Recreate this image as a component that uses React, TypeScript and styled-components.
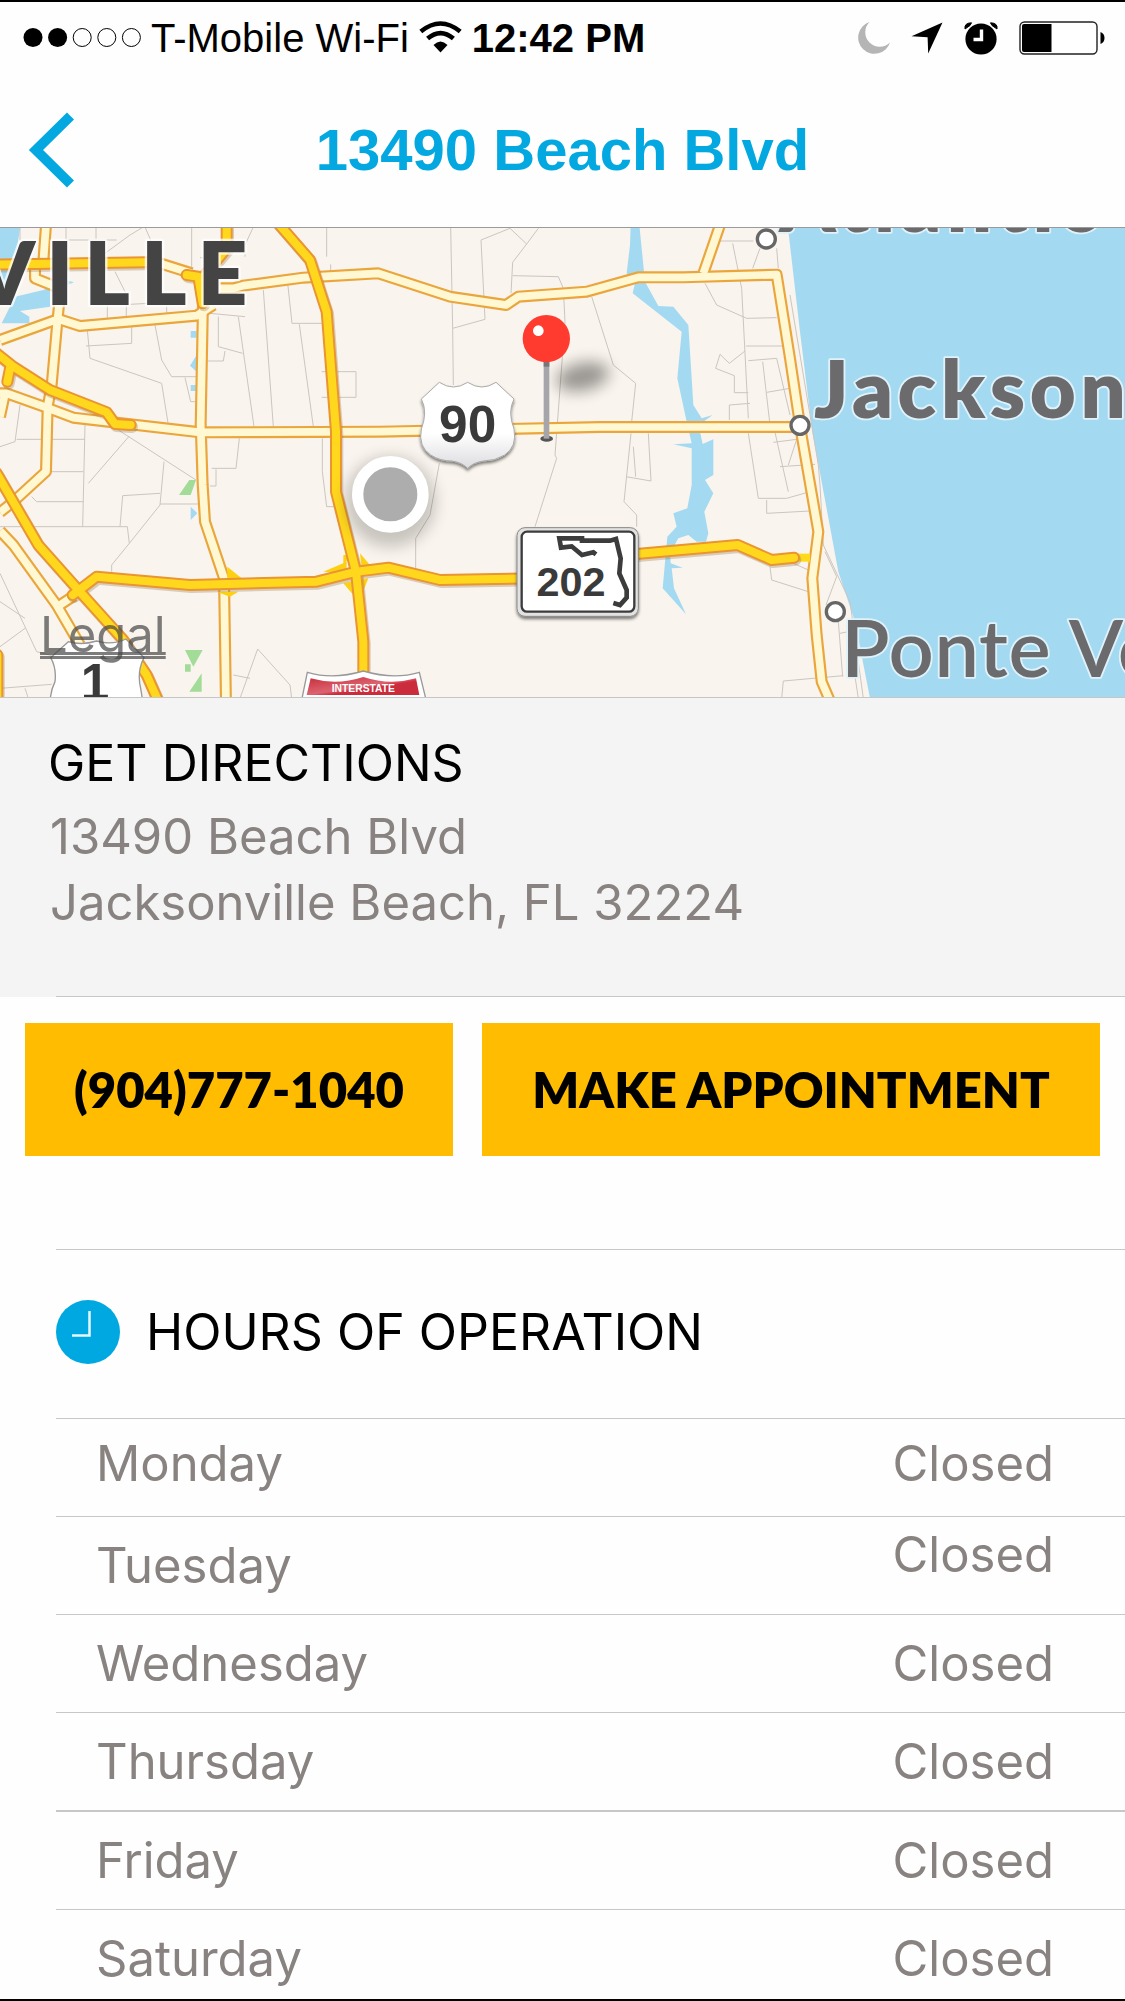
import React from "react";
import styled, { createGlobalStyle } from "styled-components";

const color = {
  blue: "#04a8e0",
  yellow: "#ffbc00",
  text: "#888281",
  line: "#c6c8c8",
  panel: "#f4f4f4",
};

const GlobalStyle = createGlobalStyle`
  *, *::before, *::after { box-sizing: border-box; }
  body { margin: 0; background: #fefefe; }
`;

const bodyFont = `Inter, "Noto Sans", sans-serif`;
const systemFont = `"Liberation Sans", Arial, sans-serif`;

const Page = styled.main`
  display: flex;
  flex-direction: column;
  min-height: 100vh;
  border-top: 2px solid #000;
  border-bottom: 2px solid #000;
  background: #fefefe;
  font-family: ${bodyFont};
  overflow: hidden;
`;

const StatusBar = styled.div`
  display: flex;
  align-items: center;
  justify-content: space-between;
  height: 72px;
  padding: 0 20px 0 23px;
  font-family: ${systemFont};
  font-size: 40px;
  line-height: 44px;
  color: #000;
`;

const StatusGroup = styled.div<{ $gap: number }>`
  display: flex;
  align-items: center;
  gap: ${(p) => p.$gap}px;
  svg { display: block; flex: none; }
`;

const Clock = styled.strong`
  font-weight: 700;
`;

const NavBar = styled.header`
  display: grid;
  grid-template-columns: 1fr auto 1fr;
  align-items: center;
  height: 153px;
  padding: 0 28px 2px;
`;

const BackButton = styled.button`
  justify-self: start;
  padding: 0;
  border: 0;
  background: none;
  cursor: pointer;
  svg { display: block; }
`;

const Title = styled.h1`
  margin: 0;
  font-family: ${systemFont};
  font-size: 58px;
  line-height: 64px;
  font-weight: 700;
  color: ${color.blue};
`;

const MapFrame = styled.section`
  position: relative;
  border-top: 1px solid #9a9a9a;
  border-bottom: 1px solid #c6c6c6;
  overflow: hidden;
`;

const MapDrawing = styled.svg`
  display: block;
  width: 100%;
  height: 469px;
`;

const LegalLink = styled.a`
  position: absolute;
  left: 40px;
  bottom: 32px;
  font-size: 49px;
  line-height: 60px;
  color: rgba(70, 70, 70, 0.7);
  text-decoration: underline double;
  text-decoration-thickness: 3px;
  text-decoration-skip-ink: none;
  text-underline-offset: 0px;
`;

const Directions = styled.section`
  padding: 32px 48px 44px;
  background: ${color.panel};
`;

const Heading = styled.h2`
  margin: 0;
  font-size: 50px;
  line-height: 66px;
  font-weight: 400;
  color: #000;
`;

const Address = styled.address`
  padding: 8px 0 16px 2px;
  font-size: 49px;
  line-height: 66px;
  font-style: normal;
  color: ${color.text};
`;

const Divider = styled.hr`
  width: calc(100% - 56px);
  height: 1px;
  margin: 0 0 0 56px;
  border: 0;
  background: ${color.line};
`;

const DirectionsRule = styled.div`
  background: ${color.panel};
`;

const Actions = styled.div`
  display: flex;
  gap: 29px;
  padding: 26px 25px 93px;
`;

const ActionButton = styled.button<{ $grow: number }>`
  flex: ${(p) => p.$grow} 1 0;
  height: 133px;
  padding: 0 0 2px;
  border: 0;
  background: ${color.yellow};
  color: #000;
  font-family: Lato, sans-serif;
  font-size: 49px;
  line-height: 60px;
  font-weight: 800;
  white-space: nowrap;
  cursor: pointer;
`;

const HoursHeader = styled.div`
  display: flex;
  align-items: center;
  gap: 26px;
  height: 168px;
  padding: 0 56px 5px;
  svg { display: block; flex: none; }
`;

const HoursTable = styled.table`
  width: calc(100% - 56px);
  margin-left: 56px;
  border-spacing: 0;
  font-size: 49px;
  line-height: 60px;
  color: ${color.text};
`;

const DayCell = styled.th<{ $rise?: number; $rule?: number }>`
  padding: ${(p) => 19 - (p.$rise ?? 0)}px 0 ${(p) => 18 + (p.$rise ?? 0)}px 40px;
  border-top: ${(p) => p.$rule ?? 1}px solid ${color.line};
  font-weight: 400;
  text-align: left;
  vertical-align: top;
  tr:last-child > & { padding-bottom: 10px; }
`;

const HoursCell = styled.td<{ $rise?: number; $rule?: number }>`
  padding: ${(p) => 19 - (p.$rise ?? 0)}px 71px ${(p) => 18 + (p.$rise ?? 0)}px 0;
  border-top: ${(p) => p.$rule ?? 1}px solid ${color.line};
  text-align: right;
  vertical-align: top;
  tr:last-child > & { padding-bottom: 10px; }
`;

type DayHours = {
  day: string;
  hours: string;
  dayRise?: number;
  hoursRise?: number;
  rule?: number;
};

const week: DayHours[] = [
  { day: "Monday", hours: "Closed", dayRise: 4, hoursRise: 4 },
  { day: "Tuesday", hours: "Closed", hoursRise: 11 },
  { day: "Wednesday", hours: "Closed" },
  { day: "Thursday", hours: "Closed" },
  { day: "Friday", hours: "Closed", rule: 2 },
  { day: "Saturday", hours: "Closed" },
];

const SignalDots = () => (
  <svg width="118" height="20" viewBox="0 0 118 20" role="img" aria-label="Signal: two of five">
    {[0, 1, 2, 3, 4].map((i) => (
      <circle
        key={i}
        cx={10 + i * 24.6}
        cy="9.5"
        r={i < 2 ? 9.5 : 9}
        fill={i < 2 ? "#000" : "none"}
        stroke={i < 2 ? "none" : "#000"}
        strokeWidth="1"
      />
    ))}
  </svg>
);

const WifiIcon = () => (
  <svg width="43" height="34" viewBox="0 0 43 34" role="img" aria-label="Wi-Fi">
    <path d="M1.8 10.5Q21.5-5.500 41.2 10.5" fill="none" stroke="#000" strokeWidth="4.600" />
    <path d="M8.600 17.600Q21.500 6.500 34.400 17.600" fill="none" stroke="#000" strokeWidth="4.600" />
    <path d="M14.500 24Q21.500 17 28.500 24L21.500 31.500Z" fill="#000" />
  </svg>
);

const MoonIcon = () => (
  <svg width="32" height="32" viewBox="0 0 32 32" role="img" aria-label="Do not disturb">
    <path d="M11.500 0A16.300 16.300 0 1 0 32 20.500A13.600 13.600 0 0 1 11.500 0Z" fill="#b5b5b5" />
  </svg>
);

const LocationIcon = () => (
  <svg width="32" height="32" viewBox="0 0 32 32" role="img" aria-label="Location">
    <path d="M31.500 .5L17.200 31.500L16.600 15.200L.5 14.200Z" fill="#000" />
  </svg>
);

const AlarmIcon = () => (
  <svg width="34" height="33" viewBox="0 0 34 33" role="img" aria-label="Alarm">
    <circle cx="17" cy="17" r="15.600" fill="#000" />
    <path d="M1 7.500A7 7 0 0 1 7.500 1M33 7.500A7 7 0 0 0 26.500 1" fill="none" stroke="#fefefe" strokeWidth="6" />
    <path d="M1 7Q0 1 7.500 .8L6 3.500Z M33 7Q34 1 26.500 .8L28 3.500Z" fill="#000" stroke="#000" />
    <path d="M17.500 7.500V17.500H9.500" fill="none" stroke="#fff" strokeWidth="3.400" />
  </svg>
);

const BatteryIcon = () => (
  <svg width="86" height="34" viewBox="0 0 86 34" role="img" aria-label="Battery: 40 percent">
    <rect x="1" y="1" width="77" height="32" rx="4.500" fill="#fff" stroke="#222" strokeWidth="1.400" />
    <path d="M5 3H32.500V31H5Q3 31 3 29V5Q3 3 5 3Z" fill="#000" />
    <path d="M81.500 11Q85.500 12.500 85.500 17T81.500 23Z" fill="#000" />
  </svg>
);

const BackIcon = () => (
  <svg width="46" height="76" viewBox="0 0 46 76" aria-hidden="true">
    <path d="M42.500 4L8 38L42.500 72" fill="none" stroke={color.blue} strokeWidth="10" />
  </svg>
);

const HoursIcon = () => (
  <svg width="64" height="64" viewBox="0 0 64 64" aria-hidden="true">
    <circle cx="32" cy="32" r="32" fill="#00a8e1" />
    <path d="M33.500 11V35.500H16" fill="none" stroke="#e6f8ff" strokeWidth="2.500" />
  </svg>
);

const streets = [
  "M60 6V45M198 6V45H350M288 6V45M315 85L390 30L430 6M435 6L480 110M575 6V130",
  "M345 140L380 210L378 300M322 240V290M390 238L500 232V265",
  "M262 315L270 400L485 475L505 600M258 363L395 355V300M465 300L485 405L515 455H590M555 458L572 530H590",
  "M630 265L735 275M655 275V365L728 385M675 378L670 408H620M715 275L762 605M790 195L820 605M862 165L876 295H965M898 298L940 605",
  "M735 95V60L760 6M980 6V95M992 118V140M600 98H660M965 440H1068V517H965",
  "M60 540L45 650L0 665M50 643H255M255 600L248 905M155 740H250M95 815L110 830H250M0 905H382L388 955M360 905L368 812L480 805M355 615L588 765M388 633L265 775M492 710L480 840L388 955L335 1020V1040M480 837H600",
  "M718 640L708 730H635M648 733V783H630M967 640V740L980 845H1005",
  "M0 1045L110 1280L155 1292M0 1130L75 1180M0 1265L75 1210M0 1390L155 1378M75 1390L85 1420M720 1420L773 1272L870 1380L875 1420M700 1350L750 1360",
  "M1352 6L1358 310L1360 480M1358 310L1455 283L1443 45L1530 10L1580 57L1538 112L1533 205M1580 57L1615 10M1538 152L1675 155L1690 190L1695 290L1665 690L1670 700L1605 905",
  "M1775 215L1840 420L1907 475L1895 590M1893 625L1872 830L1910 870V905M1945 625L1953 768L1878 755M1900 665L1907 755M1318 715L1290 870L1247 940V1035",
  "M2160 48H2260M2198 55L2225 190L2245 580M2280 70L2258 130M2330 70L2335 130M2115 175L2150 240L2240 280L2330 278M2238 363H2350M2245 407L2330 400L2370 570M2288 410L2310 600M2235 378L2188 415L2160 388L2147 430L2203 452V503H2245M2188 585V540L2250 535M2300 502L2370 490",
  "M2245 625L2275 820H2360L2430 800M2300 825V865L2430 858M2325 622L2365 800M2320 652L2390 643L2365 720M2340 725L2445 718M2370 210L2455 720L2460 780L2470 960L2550 1130L2590 1420",
  "M2475 980L2510 1055L2478 1140M2515 1190L2528 1355M2520 1225L2545 1220M2310 1025L2315 1065L2425 1100M2380 1015L2425 1035M2345 1420L2350 1368L2530 1352M2565 1355L2575 1420",
];

const roads = [
  "M138 0L130 110M105 110V160L180 190M178 230L172 290L155 480L143 545L138 740L40 830L0 862",
  "M0 345L175 282L240 303L590 272L640 240",
  "M0 505H20L140 548L220 578L600 622L1140 620L1800 606H2400",
  "M0 575L14 510",
  "M480 115L575 145",
  "M660 190H700L730 182L910 158L1135 145L1350 215L1518 240L1555 215L1760 200L1915 157L2050 157L2330 149L2370 400L2403 620L2455 920L2437 1060L2450 1230L2465 1370L2495 1440",
  "M2160 0L2110 145",
  "M609 230L602 600L608 780L615 890L672 1060L678 1440",
  "M0 918L40 960L170 1140L240 1260M165 1150L222 1112",
];

const highways = [
  "M-20 119L440 112",
  "M560 150L595 155L608 235",
  "M680 0V70L602 165",
  "M830 -10L930 105L980 260L1008 620V800L1068 1040L1090 1250V1380",
  "M-10 385L40 425L150 495L320 562L345 597L392 600",
  "M30 430L22 470",
  "M-10 745L115 960L235 1095L370 1245L440 1350L480 1440",
  "M-8 1290V1440",
  "M218 1110L290 1055L570 1080L950 1070L1070 1040L1165 1028L1320 1065L1700 1058L1910 987L2213 960L2315 1005L2382 998",
];

const Lines = ({ paths, ...rest }: { paths: string[] } & React.SVGProps<SVGGElement>) => (
  <g fill="none" strokeLinejoin="round" {...rest}>
    {paths.map((d) => (
      <path key={d} d={d} />
    ))}
  </g>
);

const MapView = () => (
  <MapDrawing
    viewBox="0 9 3375 1407"
    preserveAspectRatio="xMidYMid slice"
    role="img"
    aria-label="Map of Jacksonville Beach"
  >
    <defs>
      <filter id="soft" x="-100%" y="-100%" width="300%" height="300%">
        <feGaussianBlur stdDeviation="22" />
      </filter>
      <filter id="cast" x="-20%" y="-20%" width="140%" height="150%">
        <feDropShadow dx="0" dy="7" stdDeviation="5" floodColor="#000" floodOpacity="0.5" />
      </filter>
      <linearGradient id="shield" x1="0" y1="0" x2="0" y2="1">
        <stop offset="0.6" stopColor="#fff" />
        <stop offset="1" stopColor="#dcdce0" />
      </linearGradient>
      <linearGradient id="red" x1="0" y1="0" x2="1" y2="1">
        <stop offset="0" stopColor="#c92c3a" />
        <stop offset="0.5" stopColor="#dc6470" />
        <stop offset="0.6" stopColor="#cc2c3c" />
        <stop offset="1" stopColor="#c92c3a" />
      </linearGradient>
    </defs>

    <rect width="3375" height="1440" fill="#f9f4ed" />

    <g fill="#a3daf2">
      <path d="M0 0H62L50 75L35 105H0ZM0 135H60L45 215H0ZM45 215L130 195L195 165L222 172L150 200V245L60 258L88 275V295H5Z" />
      <path d="M572 318H590V338H572ZM590 390V440L570 422ZM572 480H590V498H572ZM572 845L592 865L572 885Z" />
      <path
        transform="translate(1140 0)"
        d="M752 0H778L790 120L795 170L835 243L880 245L925 300L940 540L965 580L998 570L970 590L960 620L968 657L1000 643V750L975 765L1000 805L973 860L985 925L978 950H950L925 930L895 940L870 985L872 1015L908 1028L875 1030L882 1090L918 1168L848 1090L862 935L890 905L880 865L922 850L935 780V670L880 658L935 655L920 590L892 460L905 320L758 205L765 175L740 145L750 60Z"
      />
      <path d="M2363 0L2400 320L2437 620L2515 1040L2565 1190L2610 1420H3400V0Z" />
    </g>
    <g fill="#a2dc98">
      <path d="M568 765H588L572 810H537Z" />
      <path d="M555 1275H608L580 1325ZM555 1318H572V1340H555ZM605 1345V1400H568Z" />
    </g>

    <Lines paths={streets} stroke="#cbc6c0" strokeWidth="3" />
    <Lines paths={roads} stroke="#eaa63c" strokeWidth="36" />
    <Lines paths={roads} stroke="#fff8d2" strokeWidth="23" />
    <path d="M2385 998H2430" stroke="#ffd91c" strokeWidth="24" />
    <path
      fill="#fdd112"
      d="M1030 1025V990L1050 990ZM970 1040L1040 1010V1045ZM1080 985L1110 1020L1085 1030ZM1030 1075L1105 1060L1085 1110L1060 1110ZM682 1025L725 1060H682ZM650 1100H715L690 1115Z"
    />
    <Lines paths={highways} stroke="#8a7050" strokeOpacity="0.3" strokeWidth="36" transform="translate(4 6)" strokeLinecap="round" />
    <Lines paths={highways} stroke="#ea9432" strokeWidth="36" strokeLinecap="round" />
    <Lines paths={highways} stroke="#ffd81e" strokeWidth="24" strokeLinecap="round" />

    <g fontFamily="Lato, sans-serif" paintOrder="stroke" strokeLinejoin="round">
      <text x="-80" y="241" fontSize="261" fontWeight="800" letterSpacing="33" fill="#444" stroke="#fff" strokeOpacity="0.75" strokeWidth="14">VILLE</text>
      <g fontSize="238" fill="#6b6b6d" stroke="#dff2fa" strokeWidth="11">
        <text x="2338" y="20" fontWeight="800" letterSpacing="16">Atlantic</text>
        <text x="2442" y="580" fontWeight="800" letterSpacing="14">Jackson</text>
        <text x="2524" y="1355" fontWeight="600" letterSpacing="2">Ponte Ve</text>
      </g>
    </g>

    <g fill="#fff" stroke="#666" strokeWidth="10">
      <circle cx="2299" cy="42" r="27" />
      <circle cx="2400" cy="601" r="27" />
      <circle cx="2506" cy="1160" r="27" />
    </g>

    <circle cx="1171" cy="830" r="135" fill="#000" opacity="0.2" filter="url(#soft)" />
    <circle cx="1171" cy="808" r="98" fill="#adadad" stroke="#fff" strokeWidth="34" />

    <g fontFamily="Liberation Sans, Arial, sans-serif" fontWeight="700" textAnchor="middle" fill="#3a3a3a">
      <g transform="translate(1140 0)">
        <path
          d="M178 472Q220 500 263 472Q306 500 348 472L402 522Q382 560 402 612Q412 665 374 690Q345 708 310 708Q280 712 263 730Q246 712 216 708Q180 708 152 690Q114 665 124 612Q144 560 124 522Z"
          fill="url(#shield)"
          stroke="#aaa"
          strokeWidth="3"
          filter="url(#cast)"
        />
        <text x="263" y="650" fontSize="154">90</text>
        <rect x="411" y="908" width="364" height="266" rx="24" fill="#e2e2e2" stroke="#888" strokeWidth="3" filter="url(#cast)" />
        <rect x="425" y="920" width="338" height="240" rx="16" fill="#fff" stroke="#3c3c3c" strokeWidth="7" />
        <path
          d="M648 988L640 982L606 990L575 964L543 968L538 940H606V947H690L708 942L722 1000L718 1045L740 1095V1118L720 1140L700 1134"
          fill="none"
          stroke="#3c3c3c"
          strokeWidth="14"
        />
        <text x="573" y="1114" fontSize="124">202</text>
      </g>
      <path
        d="M205 1250Q245 1262 290 1248Q335 1262 378 1242L432 1298Q410 1340 422 1390L430 1440H150Q150 1400 165 1370Q170 1330 152 1298Z"
        fill="#fff"
        stroke="#999"
        strokeWidth="4"
      />
      <text x="285" y="1424" fontSize="154">1</text>
      <path d="M922 1342Q1000 1365 1090 1338Q1180 1365 1258 1342L1282 1440H902Z" fill="#fff" stroke="#999" strokeWidth="4" />
      <path d="M932 1360Q1010 1382 1090 1356Q1170 1382 1248 1360L1258 1410H920Z" fill="url(#red)" />
      <text x="1090" y="1402" fontSize="31" fill="#fff">INTERSTATE</text>
    </g>

    <g transform="translate(1140 0)">
      <ellipse cx="608" cy="455" rx="80" ry="42" fill="#000" opacity="0.38" transform="rotate(-12 608 455)" filter="url(#soft)" />
      <ellipse cx="500" cy="641" rx="19" ry="9" fill="#555" />
      <rect x="491" y="405" width="17" height="236" fill="#a5a5aa" />
      <path d="M491 410H508V425H491Z" fill="#77777a" />
      <circle cx="499" cy="341" r="71" fill="#ff3b30" />
      <circle cx="475" cy="317" r="16" fill="#fff" />
    </g>
  </MapDrawing>
);

export default function App() {
  return (
    <>
      <GlobalStyle />
      <Page>
        <StatusBar>
          <StatusGroup $gap={10}>
            <SignalDots />
            <span>T-Mobile Wi-Fi</span>
            <WifiIcon />
            <Clock>12:42 PM</Clock>
          </StatusGroup>
          <StatusGroup $gap={21}>
            <MoonIcon />
            <LocationIcon />
            <AlarmIcon />
            <BatteryIcon />
          </StatusGroup>
        </StatusBar>

        <NavBar>
          <BackButton type="button" aria-label="Back">
            <BackIcon />
          </BackButton>
          <Title>13490 Beach Blvd</Title>
        </NavBar>

        <MapFrame>
          <MapView />
          <LegalLink href="#legal">Legal</LegalLink>
        </MapFrame>

        <Directions>
          <Heading>GET DIRECTIONS</Heading>
          <Address>
            13490 Beach Blvd
            <br />
            Jacksonville Beach, FL 32224
          </Address>
        </Directions>
        <DirectionsRule>
          <Divider />
        </DirectionsRule>

        <Actions>
          <ActionButton type="button" $grow={428}>(904)777-1040</ActionButton>
          <ActionButton type="button" $grow={618}>MAKE APPOINTMENT</ActionButton>
        </Actions>
        <Divider />

        <HoursHeader>
          <HoursIcon />
          <Heading id="hours-title">HOURS OF OPERATION</Heading>
        </HoursHeader>
        <HoursTable aria-labelledby="hours-title">
          <tbody>
            {week.map((row) => (
              <tr key={row.day}>
                <DayCell scope="row" $rise={row.dayRise} $rule={row.rule}>{row.day}</DayCell>
                <HoursCell $rise={row.hoursRise} $rule={row.rule}>{row.hours}</HoursCell>
              </tr>
            ))}
          </tbody>
        </HoursTable>
      </Page>
    </>
  );
}
